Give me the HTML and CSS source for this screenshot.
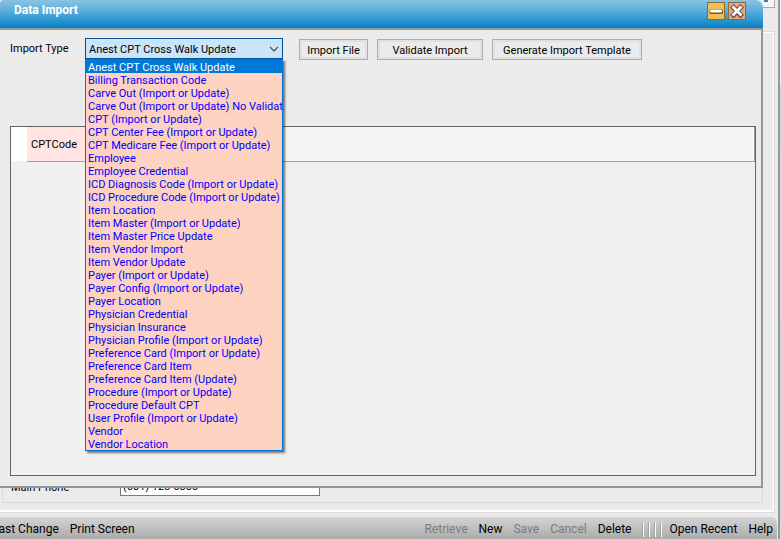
FILE: index.html
```html
<!DOCTYPE html>
<html lang="en">
<head>
<meta charset="utf-8">
<title>Data Import</title>
<link rel="stylesheet" href="styles.css">
</head>
<body>
<div class="app">
  <main class="workspace">
    <div class="page">
      <div class="scroll-corner"><span class="scroll-mark"></span></div>
      <form class="sheet">
        <div class="group">
          <label class="group-label" for="phone">Main Phone</label>
          <input class="phone" id="phone" type="text" value="(601) 123 5555">
        </div>
      </form>
    </div>
    <nav class="toolbar">
      <button class="tool" type="button">Last Change</button>
      <button class="tool" type="button">Print Screen</button>
      <span class="spacer"></span>
      <button class="tool" type="button" disabled>Retrieve</button>
      <button class="tool" type="button">New</button>
      <button class="tool" type="button" disabled>Save</button>
      <button class="tool" type="button" disabled>Cancel</button>
      <button class="tool" type="button">Delete</button>
      <span class="grips"><i></i><i></i><i></i><i></i></span>
      <button class="tool" type="button">Open Recent</button>
      <button class="tool" type="button">Help</button>
    </nav>
  </main>
  <aside class="edge"></aside>

  <section class="dialog" aria-labelledby="dialog-title">
    <header class="titlebar">
      <h1 class="title" id="dialog-title">Data Import</h1>
      <button class="winbtn minimize" type="button" aria-label="Minimize">
        <svg viewBox="0 0 16 16" width="16" height="16"><rect x="1.500" y="6" width="13.500" height="5" rx="1.500" fill="#6d5a45"/><rect x="2" y="6.500" width="12" height="3" rx="1" fill="#fff"/></svg>
      </button>
      <button class="winbtn close" type="button" aria-label="Close">
        <svg viewBox="0 0 16 16" width="16" height="16"><path d="M4.500 4.500 11.500 12M11.500 4.500 4.500 12" stroke="#5c5450" stroke-width="5" stroke-linecap="square"/><path d="M4.500 4.500 11.500 11.500M11.500 4.500 4.500 11.500" stroke="#fff" stroke-width="2.800" stroke-linecap="square"/></svg>
      </button>
    </header>
    <div class="content">
      <div class="controls">
        <label class="type-label" for="import-type">Import Type</label>
        <div class="combo">
          <select class="combo-box" id="import-type">
            <option>Anest CPT Cross Walk Update</option>
          </select>
          <svg class="chevron" viewBox="0 0 10 6" width="10" height="6"><path d="M1 .8 5 4.800 9 .8" fill="none" stroke="#444" stroke-width="1.200"/></svg>
          <ul class="menu">
            <li class="option selected">Anest CPT Cross Walk Update</li>
            <li class="option">Billing Transaction Code</li>
            <li class="option">Carve Out (Import or Update)</li>
            <li class="option">Carve Out (Import or Update) No Validation</li>
            <li class="option">CPT (Import or Update)</li>
            <li class="option">CPT Center Fee (Import or Update)</li>
            <li class="option">CPT Medicare Fee (Import or Update)</li>
            <li class="option">Employee</li>
            <li class="option">Employee Credential</li>
            <li class="option">ICD Diagnosis Code (Import or Update)</li>
            <li class="option">ICD Procedure Code (Import or Update)</li>
            <li class="option">Item Location</li>
            <li class="option">Item Master (Import or Update)</li>
            <li class="option">Item Master Price Update</li>
            <li class="option">Item Vendor Import</li>
            <li class="option">Item Vendor Update</li>
            <li class="option">Payer (Import or Update)</li>
            <li class="option">Payer Config (Import or Update)</li>
            <li class="option">Payer Location</li>
            <li class="option">Physician Credential</li>
            <li class="option">Physician Insurance</li>
            <li class="option">Physician Profile (Import or Update)</li>
            <li class="option">Preference Card (Import or Update)</li>
            <li class="option">Preference Card Item</li>
            <li class="option">Preference Card Item (Update)</li>
            <li class="option">Procedure (Import or Update)</li>
            <li class="option">Procedure Default CPT</li>
            <li class="option">User Profile (Import or Update)</li>
            <li class="option">Vendor</li>
            <li class="option">Vendor Location</li>
          </ul>
        </div>
        <button class="action import" type="button">Import File</button>
        <button class="action validate" type="button">Validate Import</button>
        <button class="action template" type="button">Generate Import Template</button>
      </div>
      <div class="grid">
        <table class="grid-table">
          <thead>
            <tr><td class="row-head"></td><th class="col-code" scope="col">CPTCode</th><td class="col-rest"></td></tr>
          </thead>
        </table>
      </div>
    </div>
  </section>
</div>
</body>
</html>
```

FILE: styles.css
```css
* { box-sizing: border-box; }

body {
  margin: 0;
  font: 11px/13px Roboto, "Liberation Sans", Arial, sans-serif;
  color: #000;
  background: #ebebeb;
}

button, input, select { font: inherit; color: inherit; margin: 0; }

.app {
  position: relative;
  display: flex;
  height: 100vh;
  overflow: hidden;
}

/* Window behind the dialog */
.workspace {
  flex: 1;
  min-width: 0;
  display: flex;
  flex-direction: column;
}

.page {
  flex: 1;
  display: flex;
  flex-direction: column;
  padding: 0 3px 4px 0;
}

.scroll-corner {
  align-self: flex-end;
  width: 16px;
  height: 8px;
  margin-bottom: 23px;
  background: #f6f6f6;
  border: solid #a8a8a8;
  border-width: 0 1px 1px 0;
}

.scroll-mark {
  display: block;
  width: 4px;
  height: 2px;
  margin-left: 5px;
  background: #3c7fb8;
}

.sheet {
  flex: 1;
  display: flex;
  border: solid #dcdcdc;
  border-width: 1px 1px 1px 0;
  padding: 0 11px 9px 2px;
  box-shadow: inset -1px 1px #fff, inset 0 -2px #fff;
}

.group {
  flex: 1;
  display: flex;
  align-items: flex-end;
  padding: 0 0 6px 8px;
  border: 1px solid #d9d9d9;
}

.group-label { width: 109px; padding-bottom: 2px; }

.phone {
  width: 200px;
  height: 20px;
  padding: 0 2px;
  border: 1px solid #7a7a7a;
  background: #fff;
}

.toolbar {
  display: flex;
  align-items: center;
  gap: 11px;
  height: 22px;
  margin-right: 1px;
  padding: 2px 4px 0 0;
  border-radius: 0 6px 0 0;
  background: linear-gradient(#d4d4d4, #ababab);
  font-size: 12px;
  line-height: 16px;
}

.tool {
  flex: none;
  padding: 0;
  border: 0;
  background: none;
}

.tool:first-child { margin-left: -8px; }
.tool:disabled { color: #7b7b7b; }
.spacer { flex: 1; }

.grips { display: flex; gap: 4px; margin-right: -4px; }

.grips i {
  width: 2px;
  height: 15px;
  background: #fff;
  border-left: 1px solid #a0a0a0;
}

.edge {
  width: 3px;
  border-left: 2px solid #969696;
  background: linear-gradient(#f2f2f2 86px, #c9dcec 86px 149px, #ddd 149px 322px, #c9dcec 322px 520px, #ddd 520px);
}

/* Data Import dialog */
.dialog {
  position: absolute;
  inset: 0 18px 51px 0;
  display: flex;
  flex-direction: column;
  background: #ebebeb;
}

.titlebar {
  display: flex;
  gap: 3px;
  height: 28px;
  padding: 2px 17px 0 14px;
  border-radius: 4px 8px 0 0;
  background: linear-gradient(#8ac4e4, #4ba7d7 50%, #0380c6);
}

.title {
  flex: 1;
  margin: 0;
  font-size: 12px;
  line-height: 16px;
  font-weight: bold;
  color: #fff;
}

.winbtn {
  width: 18px;
  height: 18px;
  padding: 0;
  border: 1px solid #8a6a3c;
  background: #f4bd50;
}

.winbtn svg { display: block; }
.close { background: #f0a578; }

.content {
  flex: 1;
  display: flex;
  flex-direction: column;
  gap: 66px;
  padding: 8px 5px 10px 10px;
  border: 2px solid #969696;
  border-left: 0;
}

.controls { display: flex; }
.type-label { width: 75px; padding-top: 4px; }

.combo { position: relative; width: 198px; margin-right: 16px; }

.combo-box {
  appearance: none;
  display: block;
  width: 100%;
  height: 21px;
  padding: 2px 20px 0 3px;
  border: 1px solid #00549b;
  border-radius: 0;
  background: #cce4f7;
}

.chevron {
  position: absolute;
  top: 8px;
  right: 4px;
}

.menu {
  position: absolute;
  z-index: 1;
  top: 21px;
  left: 0;
  width: 100%;
  margin: 0;
  padding: 0;
  list-style: none;
  overflow: hidden;
  color: #00f;
  background: #fdd2c1;
  border: 1px solid #0078d7;
  box-shadow: 2px 2px 2px #0008;
}

.option {
  padding: 2px 0 0 2px;
  line-height: 11px;
  white-space: nowrap;
}

.selected { color: #fff; background: #0078d7; }

.action {
  height: 21px;
  margin: 1px 9px 0 0;
  padding: 1px 0 0;
  border: 1px solid #adadad;
  background: #ebebeb;
  box-shadow: inset 0 0 0 2px #e1e1e1;
}

.import { width: 69px; }
.validate { width: 106px; }
.template { width: 150px; }

.grid {
  flex: 1;
  border: 1px solid #646464;
  background: #f0f0f0;
}

.grid-table {
  width: 100%;
  border-collapse: collapse;
  table-layout: fixed;
}

.grid-table td, .grid-table th {
  height: 34px;
  padding: 2px 0 0 4px;
  font-weight: normal;
  text-align: left;
}

.grid-table .row-head { width: 16px; padding: 0; background: #fff; }
.grid-table .col-code { width: 104px; background: #ffe4e1; border-bottom: 1px solid #a0a0a0; }
.grid-table .col-rest { background: #f5f5f5; border: solid #a0a0a0; border-width: 0 1px 1px 0; }
```
